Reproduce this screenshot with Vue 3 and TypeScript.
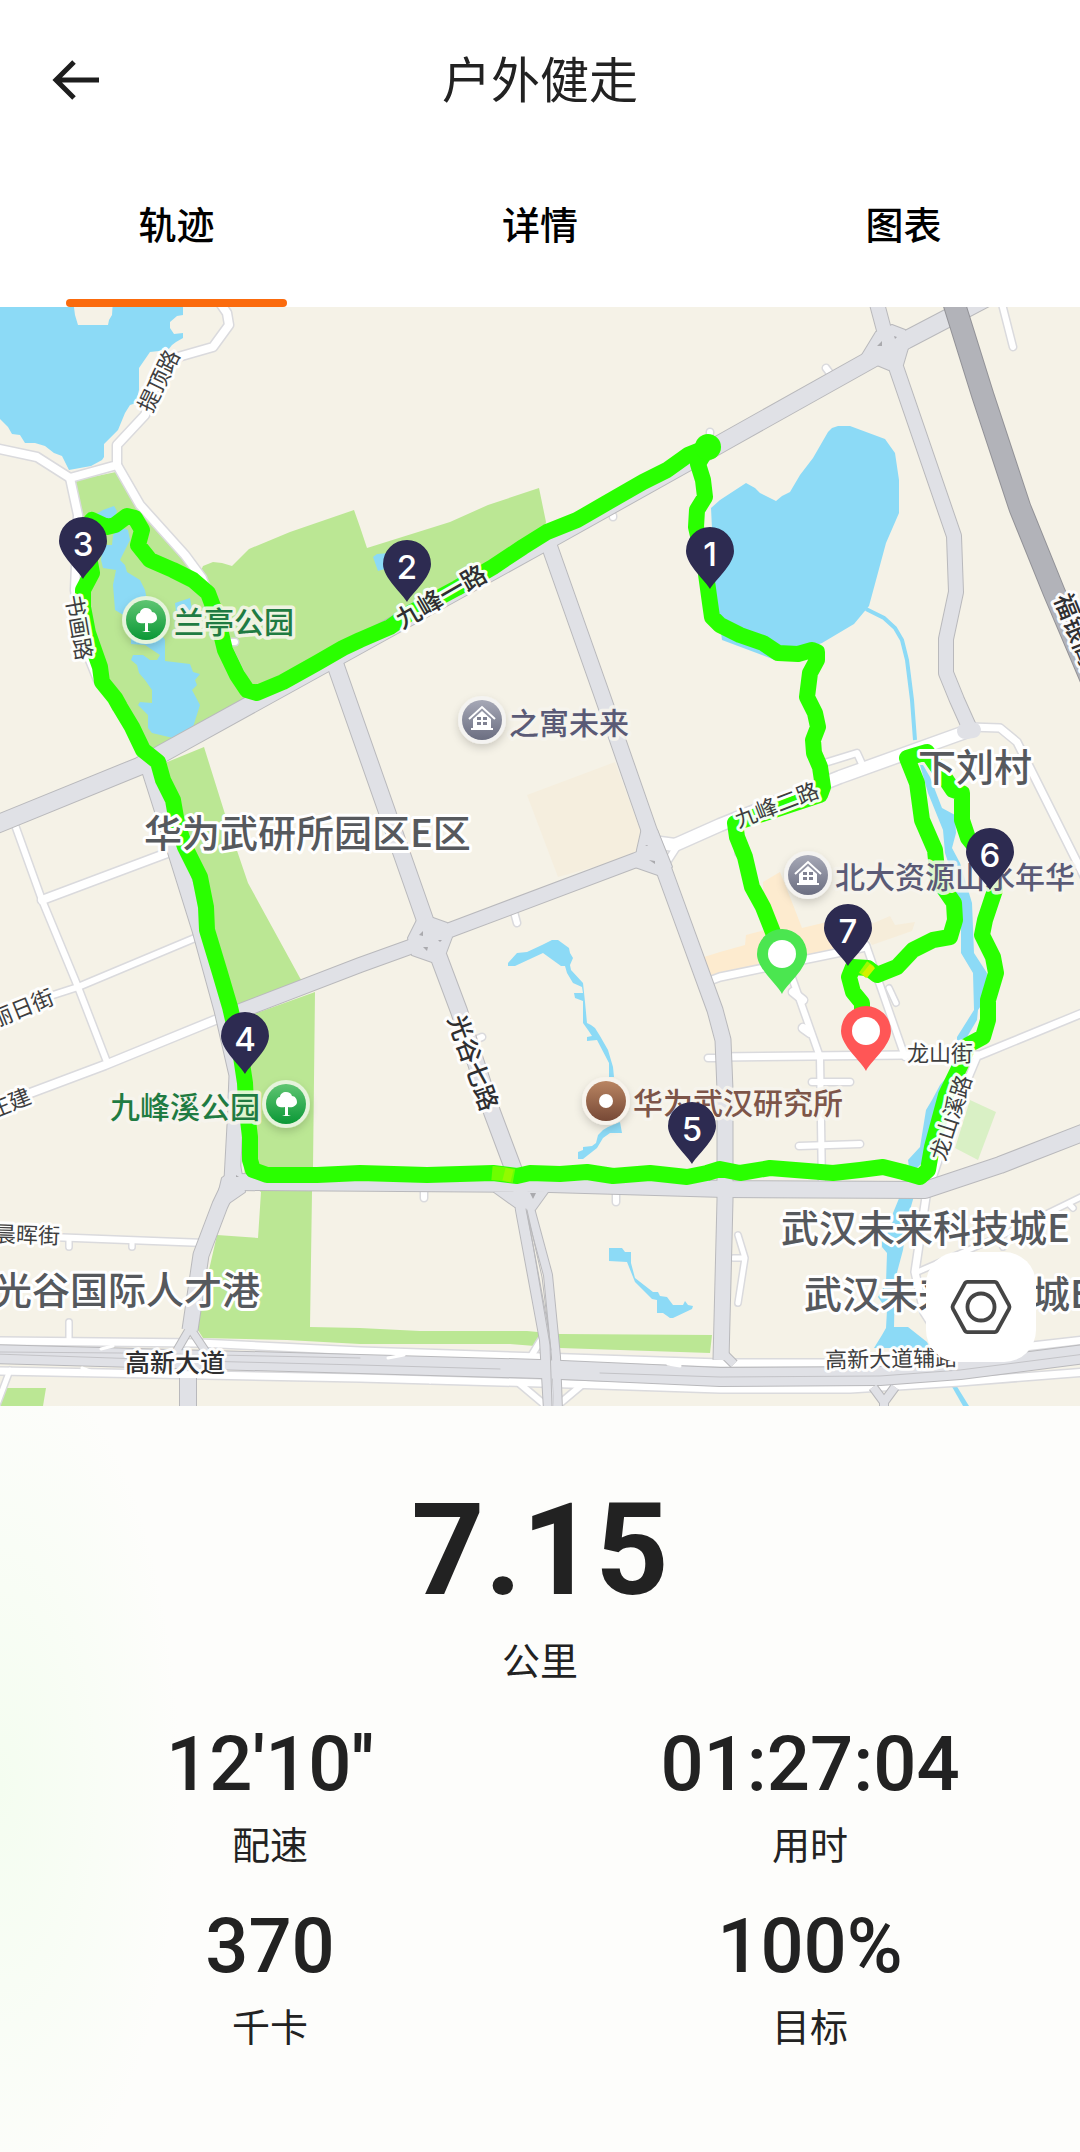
<script setup lang="ts">
import { ref } from 'vue'

interface Road { d: string; w: number }
interface Label { text: string; x: number; y: number; kind: string; rotate?: number; anchor?: 'start' | 'middle' | 'end' }
interface Pin { n: number; x: number; y: number }
interface Stat { value: string; label: string }

const tabs: string[] = ['轨迹', '详情', '图表']
const active = ref(0)

const stats: Stat[] = [
  { value: "12'10''", label: '配速' },
  { value: '01:27:04', label: '用时' },
  { value: '370', label: '千卡' },
  { value: '100%', label: '目标' },
]

const parks: string[] = [
  '73,481 116,472 137,508 185,555 200,573 203,566 213,562 222,563 232,566 249,549 290,532 354,510 360,527 367,548 450,522 488,505 539,488 546,522 540,548 163,756 140,752 110,690 95,650 80,600 80,520',
  '160,765 204,747 230,830 248,883 300,978 305,985 237,1008 215,960 190,880 170,820',
  '237,1020 315,992 314,1080 313,1167 312,1192 310,1327 360,1328 420,1331 527,1331 560,1334 712,1335 710,1353 560,1348 510,1344 360,1344 287,1340 203,1338 196,1327 217,1235 258,1238 261,1192 245,1180 240,1100',
  '6,1388 46,1388 43,1406 0,1406',
]

const waters: string[] = [
  '0,300 73,300 75,315 78,325 108,325 109,320 112,315 113,300 183,300 183,315 177,316 170,322 170,328 174,334 183,333 183,338 176,342 172,345 168,350 150,352 139,368 139,390 136,403 130,405 125,413 118,430 104,444 104,457 102,460 91,466 69,470 64,460 62,456 54,453 45,446 35,443 25,443 20,435 12,434 8,427 0,419',
  '711,508 720,500 746,483 755,488 760,493 776,501 782,496 790,492 800,475 813,458 828,432 832,428 838,426 850,426 885,439 895,453 899,480 899,513 886,543 869,606 864,612 854,624 822,643 775,660 722,640 715,590',
  '920,765 923,765 930,777 942,808 955,815 956,833 952,848 960,863 972,903 974,953 987,973 985,1000 978,1010 977,1020 967,1037 960,1055 955,1070 945,1100 925,1160 910,1175 908,1160 920,1147 926,1110 932,1100 940,1085 957,1065 957,1037 974,1010 973,973 961,953 961,923 953,877 945,853 943,830 928,793',
  '900,1196 914,1196 908,1217 903,1250 895,1280 894,1327 908,1327 927,1342 930,1348 874,1348 882,1335 886,1328 887,1310 878,1297 886,1283 887,1253 882,1247 882,1240 892,1227 893,1213',
  '951,1385 956,1385 969,1406 963,1406',
  '508,963 517,953 527,952 542,945 552,940 558,940 569,948 570,953 573,958 570,965 571,970 583,983 585,1002 587,1023 591,1025 595,1028 600,1036 608,1050 613,1067 614,1077 609,1077 609,1063 597,1040 587,1041 587,1037 592,1036 588,1030 583,1023 583,1001 575,998 574,993 583,993 582,987 573,983 567,973 565,966 561,966 543,953 515,966 508,966',
  '578,1152 583,1150 583,1147 592,1146 596,1143 598,1135 603,1130 608,1127 620,1122 622,1133 610,1133 603,1138 597,1148 583,1159 578,1159',
  '609,1248 622,1248 625,1252 631,1252 631,1263 635,1278 653,1292 658,1292 660,1296 667,1297 673,1305 683,1305 685,1301 688,1305 693,1306 692,1309 673,1318 670,1318 663,1313 657,1313 657,1300 652,1299 635,1282 627,1262 609,1261',
  '95,515 103,510 114,506 117,511 112,525 100,525',
  '113,535 120,527 128,530 130,540 120,560 125,565 127,572 140,580 145,590 147,600 155,625 165,640 165,661 190,664 193,672 200,674 195,680 197,685 192,690 200,705 193,727 180,733 173,738 152,733 148,728 148,715 138,705 140,702 152,703 152,690 145,680 139,673 137,665 131,660 133,655 143,655 150,660 157,660 160,655 145,645 131,644 131,635 140,625 115,610 113,585 116,570 103,568 101,560 103,545 112,545',
  '175,603 190,598 192,610 176,612',
  '373,557 377,554 390,553 388,568 378,571',
]

const lanes: Road[] = [
  { d: 'M-5 448 37 457 70 478 117 465 117 445 145 415 160 372 178 357 213 347 229 325 227 313 218 300', w: 8 },
  { d: 'M117 465 140 505 185 555 202 578 215 610 228 650 245 685', w: 8 },
  { d: 'M70 478 78 515 75 590 82 640 98 680', w: 8 },
  { d: 'M230 642H235', w: 6 },
  { d: 'M15 825 42 900 78 987 107 1062', w: 6 },
  { d: 'M42 900 170 852', w: 8 },
  { d: 'M50 996 78 987 195 938', w: 6 },
  { d: 'M-5 1106 25 1095 105 1065 220 1018', w: 8 },
  { d: 'M50 1237 205 1243', w: 6 },
  { d: 'M69 1239V1247M132 1242V1247M69 1322V1342M10 1370-5 1410', w: 5 },
  { d: 'M1001 300 1013 347', w: 6 },
  { d: 'M826 368 832 376M710 432V433M613 516V517M514 912 517 923M470 1042 482 1037M708 1058H718M424 1190V1198M616 1190V1202', w: 6 },
  { d: 'M660 843 675 845 720 825 840 777 968 731', w: 12 },
  { d: 'M667 862 678 845', w: 6 },
  { d: 'M818 765 857 753 862 764', w: 6 },
  { d: 'M970 727 1000 728 1017 742 1090 888', w: 7 },
  { d: 'M712 980 720 977 866 947', w: 7 },
  { d: 'M866 945 905 1057', w: 6 },
  { d: 'M889 988 896 1003M738 852V853', w: 5 },
  { d: 'M790 972 820 1057 822 1188', w: 6 },
  { d: 'M793 992 803 1000M803 1028 810 1033', w: 8 },
  { d: 'M720 1057 905 1055 980 1055 1090 1010', w: 7 },
  { d: 'M812 1082H850M799 1146 860 1144', w: 6 },
  { d: 'M978 1055 955 1110 932 1180', w: 6 },
  { d: 'M927 1190 915 1272 924 1312 945 1345', w: 7 },
  { d: 'M915 1273 1003 1235 1085 1195M1000 1235 1003 1247M1070 1205 1073 1208', w: 5 },
  { d: 'M738 1235 745 1258 738 1303M733 1258H745', w: 5 },
  { d: 'M541 1340 530 1358M520 1384 545 1405M583 1384 558 1405', w: 6 },
  { d: 'M-5 1341 200 1343 360 1351 540 1357 720 1363 890 1363 980 1352 1085 1340', w: 7 },
  { d: 'M-5 1371 360 1378 540 1383 720 1389 850 1389 960 1382 1085 1372', w: 7 },
]

const streets: Road[] = [
  { d: 'M-5 825 140 766 163 753 543 543 720 444 870 360 906 340 950 317 990 296', w: 17 },
  { d: 'M876 300 884 330 896 367 954 536 956 592 946 639 946 673 957 700 970 729', w: 14 },
  { d: 'M332 655 425 920 438 955 459 1011 492 1112 513 1168 519 1188', w: 16 },
  { d: 'M517 1180 521 1210 545 1340 549 1410', w: 10 },
  { d: 'M519 1180 531 1212 548 1275 556 1357 558 1410', w: 8 },
  { d: 'M230 1015 360 965 410 947 450 930 636 860 655 852', w: 14 },
  { d: 'M549 545 602 695 649 830 664 870 715 1010 723 1040 725 1090 725 1200 721 1360', w: 15 },
  { d: 'M235 1182 550 1184 725 1189 925 1190 1000 1165 1090 1130', w: 16 },
  { d: 'M148 765 175 850 200 930 222 1010 237 1075 235 1125 232 1180 220 1205 201 1255 190 1330', w: 15 },
  { d: 'M190 1328 176 1352M190 1328 206 1352', w: 7 },
  { d: 'M188 1378V1410', w: 16 },
  { d: 'M720 1350 734 1364', w: 8 },
  { d: 'M873 1387 884 1402 895 1387M884 1400V1410', w: 8 },
  { d: 'M-5 1354 360 1364 540 1369 720 1377 880 1376 960 1370 1085 1354', w: 18 },
]

const junctions: string[] = [
  '876,332 892,325 905,330 908,348 903,365 889,370 877,365 862,355',
  '417,920 408,938 412,955 432,962 446,953 452,937 447,923 433,918',
  '642,828 637,850 635,867 658,875 672,867 657,830',
  '494,1192 515,1207 535,1210 548,1192',
  '222,1178 215,1208 229,1203 245,1192 240,1165',
]

const track =
  'M776 940 763 907 752 887 745 857 737 837 735 823 820 795 823 787 820 767 814 753 813 740 818 727 815 713 807 697 810 673 817 660 817 652 812 650 798 654 778 653 763 643 740 635 720 625 712 617 710 603 705 567 696 527 697 510 705 497 703 480 698 464 708 447 688 455 667 470 643 482 603 505 577 520 547 532 523 547 493 567 457 588 410 613 390 627 360 640 343 648 317 663 283 682 257 693 247 690 237 675 225 650 217 617 208 593 193 580 173 570 150 560 138 545 142 530 135 518 127 516 115 525 107 527 92 520 84 530 92 573 83 590 83 607 88 633 100 667 102 682 115 698 120 707 132 727 143 750 158 762 163 780 173 800 177 823 185 847 200 877 206 907 207 930 220 973 230 1007 240 1050 245 1083 246 1103 250 1137 250 1160 253 1170 267 1175 317 1175 360 1173 427 1175 493 1173 517 1176 530 1173 560 1174 587 1172 613 1176 650 1173 687 1177 707 1173 720 1169 740 1173 770 1168 833 1173 860 1170 883 1167 903 1172 920 1177 928 1170 932 1147 946 1095 962 1062 968 1045 983 1037 988 1020 988 1000 996 973 993 957 982 935 985 920 995 890 990 865 968 838 962 820 962 793 953 790 943 775 927 752 907 758 917 783 922 820 935 850 938 880 954 903 955 920 950 937 933 940 913 950 897 967 877 975 868 968 853 967 849 977 853 992 862 1003 862 1020'

const pins: Pin[] = [
  { n: 1, x: 710, y: 589 },
  { n: 2, x: 407, y: 602 },
  { n: 3, x: 83, y: 579 },
  { n: 4, x: 245, y: 1074 },
  { n: 5, x: 692, y: 1164 },
  { n: 6, x: 990, y: 890 },
  { n: 7, x: 848, y: 966 },
]

const labels: Label[] = [
  { text: '提顶路', x: 157, y: 380, kind: 'minor', rotate: -64, anchor: 'middle' },
  { text: '书画路', x: 81, y: 627, kind: 'minor', rotate: 80, anchor: 'middle' },
  { text: '九峰一路', x: 440, y: 595, kind: 'major', rotate: -30, anchor: 'middle' },
  { text: '九峰二路', x: 776, y: 803, kind: 'minor', rotate: -21, anchor: 'middle' },
  { text: '光谷七路', x: 475, y: 1062, kind: 'major', rotate: 70, anchor: 'middle' },
  { text: '福银高速', x: 1064, y: 594, kind: 'major', rotate: 68 },
  { text: '龙山街', x: 907, y: 1051, kind: 'minor' },
  { text: '龙山溪路', x: 949, y: 1117, kind: 'minor', rotate: -72, anchor: 'middle' },
  { text: '丽日街', x: 52, y: 994, kind: 'minor', rotate: -22, anchor: 'end' },
  { text: '庄建', x: 29, y: 1093, kind: 'minor', rotate: -22, anchor: 'end' },
  { text: '晨晖街', x: 60, y: 1234, kind: 'minor', rotate: 2, anchor: 'end' },
  { text: '高新大道', x: 125, y: 1361, kind: 'major' },
  { text: '高新大道辅路', x: 825, y: 1358, kind: 'minor', rotate: -1 },
  { text: '华为武研所园区E区', x: 144, y: 830, kind: 'place' },
  { text: '下刘村', x: 918, y: 764, kind: 'place' },
  { text: '光谷国际人才港', x: 260, y: 1287, kind: 'place', anchor: 'end' },
  { text: '武汉未来科技城E', x: 781, y: 1225, kind: 'place' },
  { text: '武汉未来科技城E', x: 804, y: 1291, kind: 'place' },
  { text: '兰亭公园', x: 174, y: 620, kind: 'poi green' },
  { text: '九峰溪公园', x: 260, y: 1105, kind: 'poi green', anchor: 'end' },
  { text: '之寓未来', x: 509, y: 721, kind: 'poi slate' },
  { text: '北大资源山水年华', x: 835, y: 875, kind: 'poi slate' },
  { text: '华为武汉研究所', x: 633, y: 1101, kind: 'poi brown' },
]

const trees = [{ x: 146, y: 620 }, { x: 286, y: 1104 }]
const houses = [{ x: 482, y: 720 }, { x: 808, y: 875 }]

const spin = (l: Label): string => `translate(${l.x} ${l.y}) rotate(${l.rotate ?? 0})`
</script>

<template>
  <main class="page">
    <header class="bar">
      <button class="back" type="button" aria-label="返回">
        <svg viewBox="0 0 48 44" width="48" height="44" aria-hidden="true">
          <path d="M22 4 4 22l18 18M4 22h43" />
        </svg>
      </button>
      <h1>户外健走</h1>
    </header>

    <nav class="tabs" role="tablist">
      <button
        v-for="(t, i) in tabs"
        :key="t"
        type="button"
        role="tab"
        class="tab"
        :class="{ on: i === active }"
        :aria-selected="i === active"
        @click="active = i"
      >{{ t }}</button>
    </nav>

    <section class="map">
      <svg class="canvas" viewBox="0 307 1080 1099" role="img" aria-label="轨迹地图">
        <defs>
          <linearGradient id="gGreen" x1="0" y1="0" x2="0" y2="1"><stop offset="0" stop-color="#5fc572" /><stop offset="1" stop-color="#0b9836" /></linearGradient>
          <linearGradient id="gSlate" x1="0" y1="0" x2="0" y2="1"><stop offset="0" stop-color="#a6a8b6" /><stop offset="1" stop-color="#6b6e81" /></linearGradient>
          <linearGradient id="gBrown" x1="0" y1="0" x2="0" y2="1"><stop offset="0" stop-color="#b98562" /><stop offset="1" stop-color="#774936" /></linearGradient>
          <filter id="soft" x="-50%" y="-50%" width="200%" height="200%"><feDropShadow dx="0" dy="4" stdDeviation="4" flood-color="#000" flood-opacity=".16" /></filter>
        </defs>
        <rect y="300" width="1080" height="1110" fill="#f5f2e7" />
        <polygon points="527,795 615,762 642,835 637,855 558,877" fill="#f5eede" />
        <polygon points="704,957 720,952 745,945 746,935 765,930 763,882 780,872 790,897 802,928 827,922 848,928 862,947 708,979" fill="#fdebcf" />
        <polygon points="862,928 890,916 895,925 915,922 912,931 872,945" fill="#f6edda" />
        <polygon points="970,1100 996,1112 978,1160 955,1148" fill="#d9f0c5" />
        <polygon v-for="p in parks" :key="p" :points="p" fill="#bbe794" />
        <polygon v-for="p in waters" :key="p" :points="p" fill="#8cdaf6" />
        <path d="M866 609 884 618 895 628 902 640 907 660 912 700 915 740" fill="none" stroke="#8cdaf6" stroke-width="4" />

        <g class="lines">
          <path v-for="r in lanes" :key="'lc' + r.d" :d="r.d" stroke="#dadadd" :stroke-width="r.w + 3" />
          <path v-for="r in lanes" :key="'lf' + r.d" :d="r.d" stroke="#fff" :stroke-width="r.w" />
          <g class="flat">
            <path v-for="r in streets" :key="'sc' + r.d" :d="r.d" stroke="#b9b9bc" :stroke-width="r.w + 2" />
          </g>
          <polygon v-for="j in junctions" :key="'jc' + j" :points="j" stroke="#b9b9bc" stroke-width="2" />
          <g class="flat">
            <path v-for="r in streets" :key="'sf' + r.d" :d="r.d" stroke="#e0e1e6" :stroke-width="r.w" />
          </g>
          <polygon v-for="j in junctions" :key="'jf' + j" :points="j" style="fill: #e0e1e6" />
          <path d="M526 1209 533 1245 550 1345 552 1406M527 1210 542 1277 551 1350" stroke="#b9b9bc" stroke-width="1" />
          <path d="M965 731 973 730" stroke="#e0e1e6" stroke-width="16" />
          <path d="M-5 1354 200 1361 360 1365 500 1369M600 1373 720 1377 880 1376 960 1370 1085 1354M0 1352 120 1353 360 1358" stroke="#c3c3c7" stroke-width="1" />
          <path d="M101 1349 113 1346M82 1368 90 1371M388 1358 404 1355M424 1379 430 1382M668 1364 680 1366" stroke="#fff" stroke-width="3" />
          <path d="M953 300 983 396 1020 508 1054 592 1094 686" stroke="#929297" stroke-width="23" />
          <path d="M953 300 983 396 1020 508 1054 592 1094 686" stroke="#b2b3b9" stroke-width="21" />
        </g>
        <path d="m877 346 5-5v5zM894 336l3 1-2 2zM419 935l4-4v5zM423 947l5 0-1 4zM438 940l4 0-2 2zM649 860l6 1 0 3zM645 845l3 0-1 1zM236 1175l3 2-3 0zM530 1193h6l-3 6z" fill="#aaaaae" />

        <path :d="track" class="track" />
        <circle cx="708" cy="447" r="13" fill="#2aff00" />
        <path d="M492 1173 503 1174 514 1176" stroke="#6dff00" stroke-width="14" fill="none" />
        <path d="M504 1174 512 1176" stroke="#92fa00" stroke-width="13" fill="none" />
        <path d="M863 967 870 972" stroke="#9cfa00" stroke-width="14" fill="none" />
        <path d="M866 969 871 973" stroke="#d5f000" stroke-width="13" fill="none" />

        <g v-for="(l, i) in labels" :key="i" :transform="spin(l)">
          <text class="label" :class="l.kind" :text-anchor="l.anchor ?? 'start'" dominant-baseline="central">{{ l.text }}</text>
        </g>

        <g v-for="t in trees" :key="'t' + t.x" :transform="`translate(${t.x} ${t.y})`">
          <circle r="24" fill="#e6f3dc" filter="url(#soft)" />
          <circle r="20" fill="url(#gGreen)" />
          <path d="M-1 11V3C-5 4-10 3-10-2c0-3 2-5 4-5 0-3 3-5 6-5s5 1 6 4c3 0 5 3 5 6 0 4-5 6-9 5V11l3 1H-4z" fill="#fff" />
        </g>
        <g v-for="h in houses" :key="'h' + h.x" :transform="`translate(${h.x} ${h.y})`">
          <circle r="24" fill="#f4f3f1" filter="url(#soft)" />
          <circle r="20" fill="url(#gSlate)" />
          <path d="M-13-1 0-13 13-1" fill="none" stroke="#fff" stroke-width="2" />
          <path d="M-9-1 0-9 9-1V8h2v2H-11V8h2z" fill="#fff" />
          <path d="M-5-3h4v3h-4zM1-3h4v3H1zM-5 2h4v3h-4zM1 2h4v3H1z" fill="#7f8192" />
        </g>
        <g transform="translate(606 1101)">
          <circle r="24" fill="#f7f3ec" filter="url(#soft)" />
          <circle r="20" fill="url(#gBrown)" />
          <circle r="7" fill="#fff" />
        </g>

        <g v-for="p in pins" :key="p.n" :transform="`translate(${p.x} ${p.y})`">
          <path d="M0 0C-4-8-24-24-24-38a24 24 0 0 1 48 0C24-24 4-8 0 0z" fill="#2d2b51" />
          <text class="num" y="-23" text-anchor="middle">{{ p.n }}</text>
        </g>
        <g transform="translate(782 994)">
          <path d="M0 0C-4-9-25-25-25-40a25 25 0 0 1 50 0C25-25 4-9 0 0z" fill="#4be650" />
          <circle cy="-40" r="14" fill="#fff" />
        </g>
        <g transform="translate(866 1071)">
          <path d="M0 0C-4-9-25-25-25-40a25 25 0 0 1 50 0C25-25 4-9 0 0z" fill="#ff5656" />
          <circle cy="-40" r="14" fill="#fff" />
        </g>
      </svg>

      <button class="settings" type="button" aria-label="地图设置">
        <svg viewBox="0 0 66 58" width="64" height="56" aria-hidden="true">
          <path d="M19 3H47Q49 3 50 5L62 27Q63 29 62 31L50 53Q49 55 47 55H19Q17 55 16 53L4 31Q3 29 4 27L16 5Q17 3 19 3Z" />
          <circle cx="33" cy="29" r="14" />
        </svg>
      </button>
    </section>

    <section class="summary">
      <div class="hero">
        <strong>7.15</strong>
        <span>公里</span>
      </div>
      <div class="grid">
        <div v-for="s in stats" :key="s.label" class="stat">
          <b>{{ s.value }}</b>
          <span>{{ s.label }}</span>
        </div>
      </div>
    </section>
  </main>
</template>

<style>
body {
  margin: 0;
  background: #fff;
}
</style>

<style scoped>
.page {
  min-height: 100vh;
  display: flex;
  flex-direction: column;
  background: #fff;
  color: #222;
  font-family: Roboto, "Noto Sans CJK SC", sans-serif;
}
button {
  border: 0;
  padding: 0;
  background: none;
  color: inherit;
  font-family: inherit;
  cursor: pointer;
}
.bar {
  display: grid;
  grid-template-columns: 100px 1fr 100px;
  align-items: center;
  height: 160px;
}
.back {
  display: flex;
  justify-content: flex-end;
}
.back svg {
  fill: none;
  stroke: #1e1e1e;
  stroke-width: 5;
}
h1 {
  margin: 0;
  padding-top: 4px;
  text-align: center;
  font-size: 49px;
  line-height: 72px;
  font-weight: 400;
}
.tabs {
  display: flex;
  justify-content: space-between;
  height: 147px;
  padding: 0 66px;
}
.tab {
  position: relative;
  width: 221px;
  padding-bottom: 16px;
  color: #000;
  font-size: 38px;
  line-height: 56px;
  font-weight: 500;
}
.tab.on::after {
  content: "";
  position: absolute;
  left: 0;
  right: 0;
  bottom: 0;
  height: 8px;
  border-radius: 4px;
  background: #fb6b0d;
}
.map {
  position: relative;
  overflow: hidden;
}
.canvas {
  display: block;
  width: 100%;
  height: auto;
}
.lines {
  fill: none;
  stroke-linejoin: round;
  stroke-linecap: round;
}
.flat {
  stroke-linecap: butt;
}
.track {
  fill: none;
  stroke: #2aff00;
  stroke-width: 16;
  stroke-linejoin: round;
  stroke-linecap: round;
}
.label {
  font-family: "Noto Sans CJK SC", sans-serif;
  paint-order: stroke;
  stroke: #fffffff0;
  stroke-width: 6px;
  stroke-linejoin: round;
}
.place {
  font-size: 38px;
  font-weight: 500;
  fill: #56595d;
  stroke: #fff;
}
.major {
  font-size: 25px;
  font-weight: 500;
  fill: #2f2f31;
}
.minor {
  font-size: 22px;
  fill: #3e3e40;
}
.poi {
  font-size: 30px;
  fill: #5a5a76;
  stroke: #f7f5eee6;
  stroke-width: 7px;
}
.poi.green {
  fill: #1f7b42;
}
.poi.brown {
  fill: #7d5549;
}
.poi.green,
.poi.slate,
.poi.brown {
  font-weight: 500;
}
.num {
  font-family: Inter, sans-serif;
  font-size: 33px;
  font-weight: 500;
  fill: #fff;
}
.settings {
  position: absolute;
  right: 44px;
  bottom: 44px;
  display: grid;
  place-items: center;
  width: 110px;
  height: 110px;
  border-radius: 32px;
  background: #fff;
}
.settings svg {
  fill: none;
  stroke: #454545;
  stroke-width: 4;
}
.summary {
  flex: 1;
  padding: 80px 0 72px;
  background: radial-gradient(ellipse 180px 440px at 0 380px, #f4fdf0, #f4fdf000), #fdfdfb;
}
.hero,
.stat {
  display: flex;
  flex-direction: column;
  align-items: center;
}
.hero strong {
  font-size: 128px;
  line-height: 128px;
  font-weight: 700;
}
.hero span,
.stat span {
  font-size: 38px;
  line-height: 56px;
}
.hero span {
  margin-top: 20px;
}
.grid {
  display: grid;
  grid-template-columns: 1fr 1fr;
  row-gap: 28px;
  margin-top: 30px;
}
.stat b {
  font-size: 76px;
  line-height: 88px;
  font-weight: 500;
}
.stat span {
  margin-top: 10px;
}
</style>
